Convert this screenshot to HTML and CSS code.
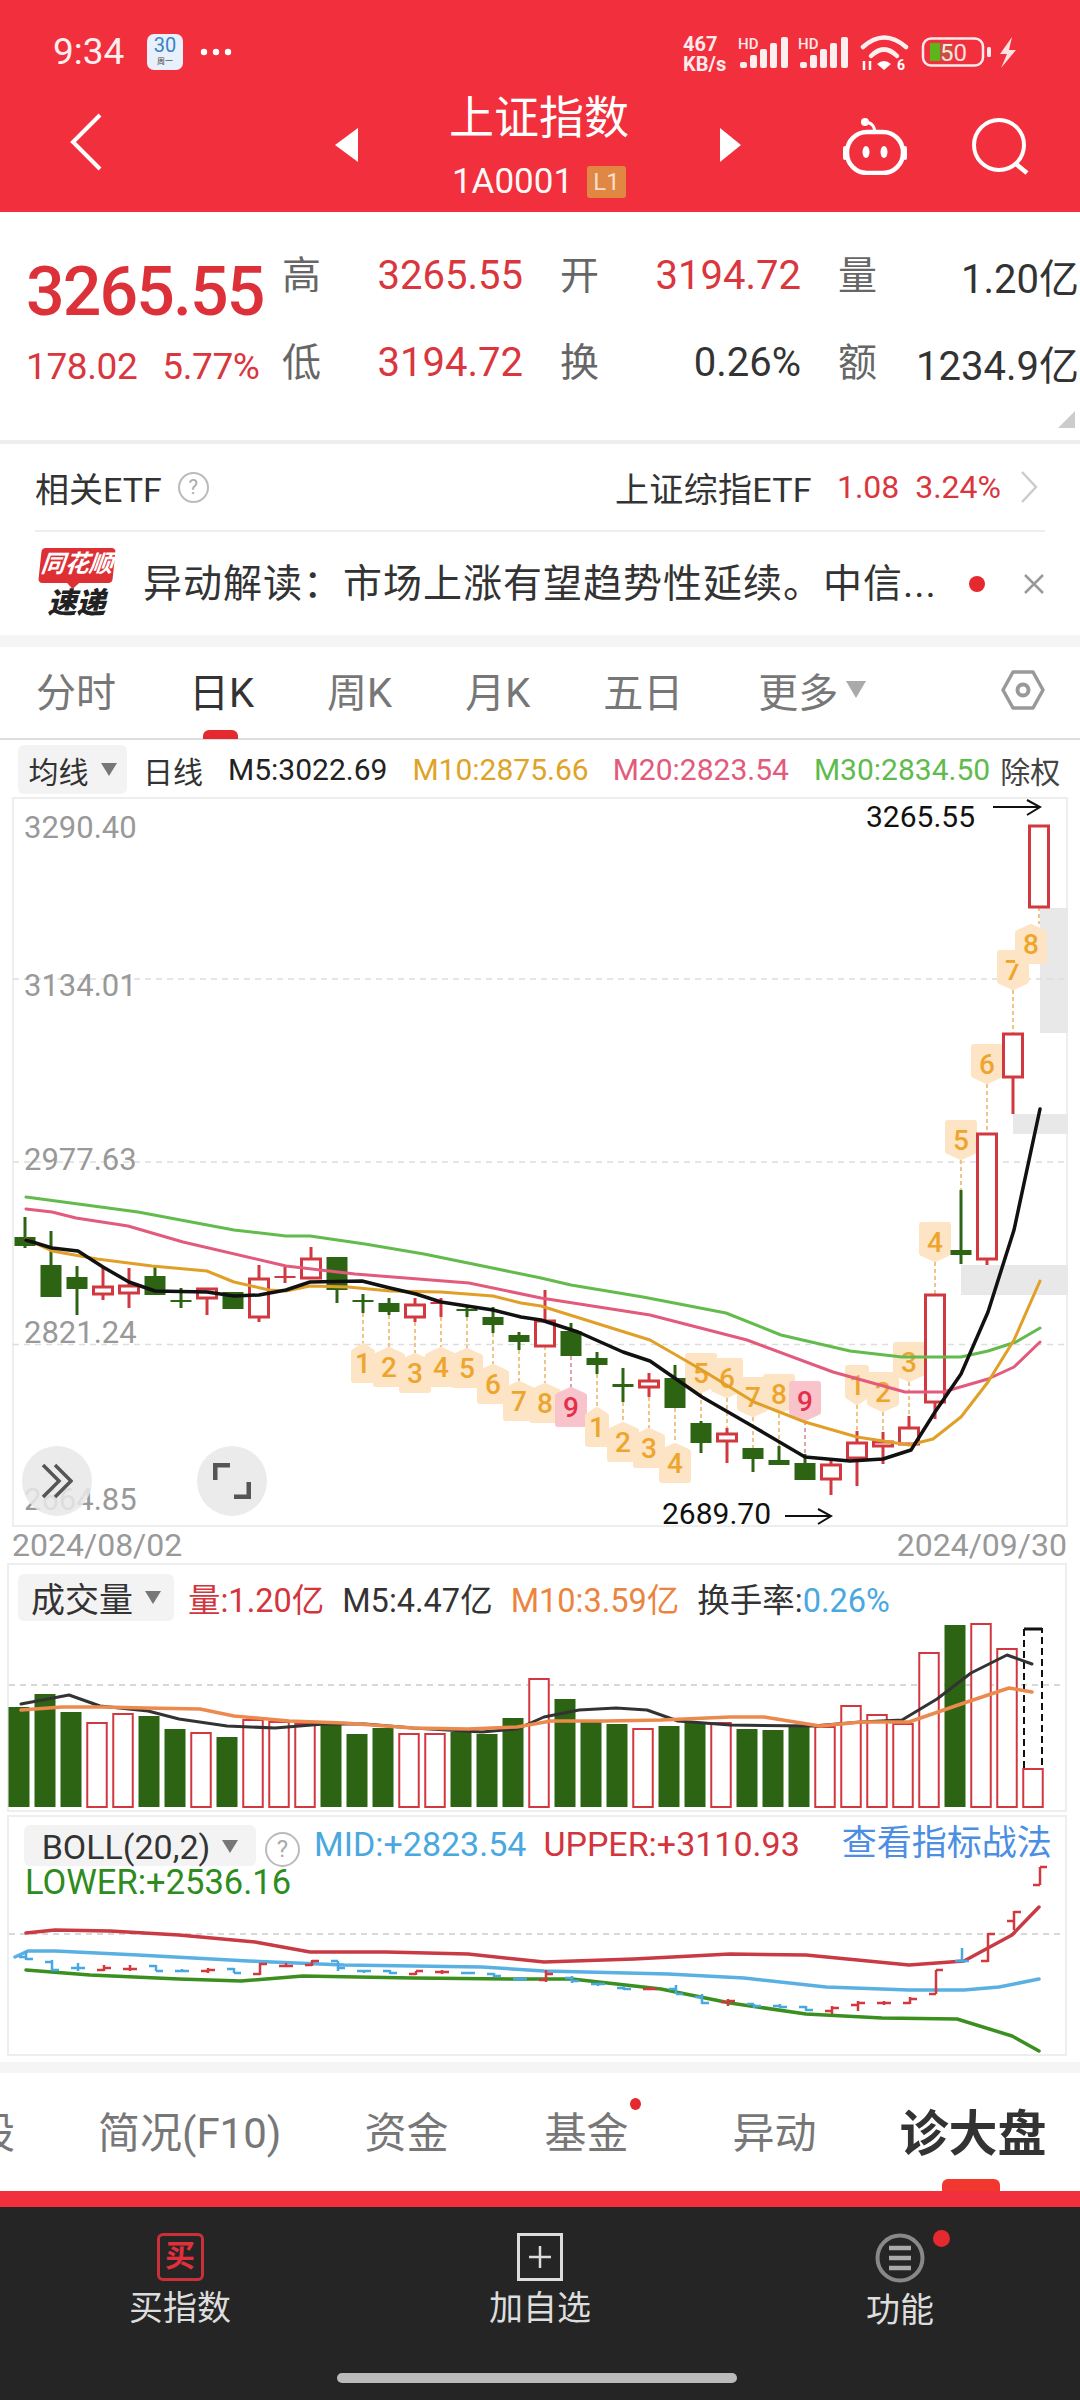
FILE: index.html
```html
<!DOCTYPE html>
<html lang="zh-CN">
  <head>
    <meta charset="utf-8">
    <title>上证指数</title>
    <link rel="stylesheet" href="styles.css">
  </head>
  <body>
    <div id="top">
      <div class="status">
        <span class="clock">9:34</span>
        <span class="cal"><b>30</b><i>周一</i></span>
        <svg class="more" width="32" height="8" viewBox="0 0 32 8"><circle cx="4" cy="4" r="3.2" fill="#fff"/><circle cx="16" cy="4" r="3.2" fill="#fff"/><circle cx="28" cy="4" r="3.2" fill="#fff"/></svg>
        <svg class="status-icons" width="334" height="46" viewBox="683 30 334 46">
          <text x="683" y="51" class="net">467</text>
          <text x="683" y="71" class="net">KB/s</text>
          <text x="738" y="49" class="hd">HD</text>
          <g fill="#fff" opacity=".92">
            <rect x="740" y="62" width="7" height="6" rx="2"/><rect x="750" y="55" width="7" height="13" rx="2"/><rect x="760" y="49" width="7" height="19" rx="2"/><rect x="770" y="43" width="7" height="25" rx="2"/><rect x="781" y="37" width="7" height="31" rx="2"/>
          </g>
          <text x="798" y="49" class="hd">HD</text>
          <g fill="#fff" opacity=".92">
            <rect x="800" y="62" width="7" height="6" rx="2"/><rect x="810" y="55" width="7" height="13" rx="2"/><rect x="820" y="49" width="7" height="19" rx="2"/><rect x="830" y="43" width="7" height="25" rx="2"/><rect x="841" y="37" width="7" height="31" rx="2"/>
          </g>
          <g fill="none" stroke="#fff" stroke-width="4.5" opacity=".92" stroke-linecap="round">
            <path d="M863 47Q884 28 906 47"/>
            <path d="M871 56Q884 43 897 56"/>
          </g>
          <path d="M877 64Q884 58 891 64L884 70Z" fill="#fff"/>
          <path d="M864 61v9M870 61v9" stroke="#fff" stroke-width="2.5"/>
          <text x="897" y="70" class="wifi6">6</text>
          <rect x="930" y="43" width="10" height="18" fill="#5cb51a"/>
          <rect x="940" y="43" width="13" height="18" fill="#c9503c"/>
          <rect x="923" y="38.5" width="60" height="27" rx="8" fill="none" stroke="#fff" stroke-width="2.5" opacity=".9"/>
          <rect x="987" y="47" width="4" height="10" rx="1.5" fill="#fff" opacity=".9"/>
          <text x="940" y="61" class="batt">50</text>
          <path d="M1012 37L1000 54H1007L1001 68L1016 50H1009Z" fill="#fff" opacity=".85"/>
        </svg>
      </div>
      <div class="nav">
        <svg class="back" width="34" height="60" viewBox="0 0 34 60"><path d="M31 3L4 30L31 57" fill="none" stroke="#fff" stroke-width="4"/></svg>
        <div class="switcher">
          <span class="tri tri-left"></span>
          <div class="name">
            <div class="name-title">上证指数</div>
            <div class="name-code">1A0001<span class="lvl">L1</span></div>
          </div>
          <span class="tri tri-right"></span>
        </div>
        <div class="nav-icons">
          <svg width="64" height="58" viewBox="843 116 64 58">
            <path d="M874 132C876 126 871 121 865 121" fill="none" stroke="#fff" stroke-width="3"/>
            <circle cx="865" cy="121" r="4" fill="#fff"/>
            <rect x="847" y="131" width="56" height="41" rx="20" fill="none" stroke="#fff" stroke-width="4.5"/>
            <rect x="843" y="145" width="4" height="14" rx="2" fill="#fff"/>
            <rect x="903" y="145" width="4" height="14" rx="2" fill="#fff"/>
            <ellipse cx="866" cy="151" rx="3.5" ry="6" fill="#fff"/>
            <ellipse cx="884" cy="151" rx="3.5" ry="6" fill="#fff"/>
          </svg>
          <svg width="60" height="58" viewBox="972 116 60 58">
            <circle cx="999" cy="144" r="25" fill="none" stroke="#fff" stroke-width="4"/>
            <path d="M1016 163L1027 172" stroke="#fff" stroke-width="4.5"/>
          </svg>
        </div>
      </div>
    </div>

    <div class="stats">
      <div class="now">
        <div class="now-price">3265.55</div>
        <div class="now-change"><span>178.02</span><span>5.77%</span></div>
      </div>
      <div class="cells">
        <div class="cell"><span class="k">高</span><span class="v up">3265.55</span></div>
        <div class="cell"><span class="k">开</span><span class="v up">3194.72</span></div>
        <div class="cell"><span class="k">量</span><span class="v">1.20亿</span></div>
        <div class="cell"><span class="k">低</span><span class="v up">3194.72</span></div>
        <div class="cell"><span class="k">换</span><span class="v">0.26%</span></div>
        <div class="cell"><span class="k">额</span><span class="v">1234.9亿</span></div>
      </div>
      <span class="corner"></span>
    </div>

    <div class="etf">
      <span class="etf-title">相关ETF</span>
      <span class="help">?</span>
      <span class="etf-name">上证综指ETF</span>
      <span class="etf-val">1.08&nbsp;&nbsp;3.24%</span>
      <svg class="etf-go" width="18" height="32" viewBox="0 0 18 32"><path d="M2 1L16 16L2 31" fill="none" stroke="#ccc" stroke-width="2.5"/></svg>
    </div>

    <div class="notice">
      <div class="logo">
        <div class="logo-top"><span>同花顺</span></div>
        <div class="logo-bot">速递</div>
      </div>
      <div class="notice-text">异动解读：市场上涨有望趋势性延续。中信...</div>
      <span class="notice-dot"></span>
      <svg width="22" height="22" viewBox="0 0 22 22"><path d="M2 2L20 20M20 2L2 20" stroke="#999" stroke-width="2.5"/></svg>
    </div>

    <div class="band"></div>

    <div class="periods">
      <span>分时</span>
      <span class="on">日K</span>
      <span>周K</span>
      <span>月K</span>
      <span>五日</span>
      <span class="with-tri">更多<i class="down"></i></span>
      <svg class="hex" width="44" height="42" viewBox="0 0 44 42">
        <path d="M12 3H32L42 21L32 39H12L2 21Z" fill="none" stroke="#999" stroke-width="3.5" stroke-linejoin="round"/>
        <circle cx="22" cy="21" r="5.5" fill="none" stroke="#999" stroke-width="4"/>
      </svg>
    </div>

    <div class="ma">
      <span class="pick">均线<i class="down small"></i></span>
      <span class="ma-day">日线</span>
      <span class="ma-5">M5:3022.69</span>
      <span class="ma-10">M10:2875.66</span>
      <span class="ma-20">M20:2823.54</span>
      <span class="ma-30">M30:2834.50</span>
      <span class="ma-fq">除权</span>
    </div>

    <div class="chart">
      <svg id="kline" width="1056" height="730" viewBox="12 797 1056 730"></svg>
      <span class="round-btn round-skip">
        <svg width="32" height="36" viewBox="0 0 32 36"><path d="M2 2L18 18L2 34M14 2L30 18L14 34" fill="none" stroke="#555" stroke-width="3.5"/></svg>
      </span>
      <span class="round-btn round-full">
        <svg width="38" height="36" viewBox="0 0 38 36"><path d="M2 17V2H17M36 19V34H21" fill="none" stroke="#555" stroke-width="5"/></svg>
      </span>
    </div>

    <div class="dates"><span>2024/08/02</span><span>2024/09/30</span></div>

    <div class="panel panel-vol">
      <svg id="volume" width="1060" height="249" viewBox="7 1563 1060 249"></svg>
      <div class="legend">
        <span class="pick pick-vol">成交量<i class="down small"></i></span>
        <span class="c-red">量:1.20亿</span>
        <span class="c-dark">M5:4.47亿</span>
        <span class="c-orange">M10:3.59亿</span>
        <span class="c-dark">换手率:<em class="c-blue">0.26%</em></span>
      </div>
    </div>

    <div class="panel panel-boll">
      <svg id="boll" width="1060" height="241" viewBox="7 1815 1060 241"></svg>
      <div class="legend legend-boll">
        <span class="pick pick-boll">BOLL(20,2)<i class="down small"></i></span>
        <span class="help help-boll">?</span>
        <span class="c-blue">MID:+2823.54</span>
        <span class="c-red">UPPER:+3110.93</span>
        <span class="boll-link">查看指标战法</span>
      </div>
      <div class="legend-lower">LOWER:+2536.16</div>
    </div>

    <div class="band band-low"></div>

    <div class="tabs">
      <span>股</span>
      <span>简况(F10)</span>
      <span>资金</span>
      <span class="tab-fund">基金</span>
      <span>异动</span>
      <span class="tab-on">诊大盘</span>
    </div>

    <div class="red-strip"></div>

    <div class="bar">
      <div class="bar-item">
        <span class="buy-icon">买</span>
        <span>买指数</span>
      </div>
      <div class="bar-item">
        <svg width="46" height="48" viewBox="0 0 46 48"><rect x="1.5" y="1.5" width="43" height="45" fill="none" stroke="#ddd" stroke-width="3"/><path d="M23 13V35M12 24H34" stroke="#ddd" stroke-width="2.5"/></svg>
        <span>加自选</span>
      </div>
      <div class="bar-item">
        <span class="fn-icon">
          <svg width="50" height="50" viewBox="0 0 50 50"><circle cx="25" cy="25" r="22.5" fill="none" stroke="#888" stroke-width="4"/><path d="M14 15H36M14 25H36M14 35H36" stroke="#aaa" stroke-width="4.5"/></svg>
          <i class="fn-dot"></i>
        </span>
        <span>功能</span>
      </div>
      <div class="home"></div>
    </div>

    <script src="chart.js"></script>
  </body>
</html>
```

FILE: styles.css
```css
html, body {
  margin: 0;
  padding: 0;
}
body {
  width: 1080px;
  height: 2400px;
  overflow: hidden;
  background: #fff;
  color: #333;
  font-family: Roboto, "Noto Sans CJK SC", sans-serif;
  display: flex;
  flex-direction: column;
}
i, em {
  font-style: normal;
}

/* header */
#top {
  height: 212px;
  background: #f22f3c;
  color: #fff;
  flex: none;
}
.status {
  height: 85px;
  box-sizing: border-box;
  padding: 34px 63px 0 53px;
  display: flex;
  align-items: flex-start;
}
.clock {
  font-size: 37px;
  line-height: 36px;
  width: 94px;
  opacity: .92;
}
.cal {
  width: 36px;
  height: 36px;
  background: #e8f1fb;
  border-radius: 7px;
  display: flex;
  flex-direction: column;
  align-items: center;
  color: #3b82c4;
}
.cal b {
  font-weight: 400;
  font-size: 20px;
  line-height: 23px;
}
.cal i {
  font-size: 8px;
  line-height: 10px;
  color: #444;
}
.more {
  margin: 14px 0 0 17px;
}
.status-icons {
  margin: -4px 0 0 auto;
  overflow: visible;
}
.net {
  font-size: 20px;
  font-weight: 700;
  fill: #fff;
  opacity: .9;
}
.hd {
  font-size: 15px;
  font-weight: 500;
  fill: #fff;
  opacity: .9;
}
.wifi6 {
  font-size: 14px;
  font-weight: 700;
  fill: #fff;
}
.batt {
  font-size: 24px;
  fill: #fff;
  opacity: .85;
}
.nav {
  height: 127px;
  display: grid;
  grid-template-columns: 1fr auto 1fr;
  align-items: center;
}
.back {
  margin: -14px 0 0 69px;
}
.switcher {
  display: flex;
  align-items: center;
  gap: 0;
  width: 407px;
  justify-content: space-between;
  margin-left: -4px;
}
.tri {
  width: 0;
  height: 0;
  border-top: 17px solid transparent;
  border-bottom: 17px solid transparent;
  margin-top: -8px;
}
.tri-left {
  border-right: 23px solid #fff;
}
.tri-right {
  border-left: 21px solid #fff;
}
.name {
  text-align: center;
}
.name-title {
  font-size: 45px;
  line-height: 54px;
  margin-top: -2px;
}
.name-code {
  font-size: 35px;
  line-height: 44px;
  margin-top: 14px;
  display: flex;
  align-items: center;
  justify-content: center;
  gap: 14px;
  opacity: .97;
}
.lvl {
  width: 39px;
  height: 32px;
  line-height: 32px;
  background: #e08a44;
  border-radius: 3px;
  font-size: 24px;
  text-align: center;
  color: #f8e4d0;
}
.nav-icons {
  display: flex;
  justify-content: flex-end;
  align-items: center;
  gap: 65px;
  padding-right: 48px;
  margin-top: -6px;
}

/* quote block */
.stats {
  height: 232px;
  flex: none;
  position: relative;
  display: flex;
  box-sizing: border-box;
  padding: 20px 5px 0 26px;
  border-bottom: 4px solid #eee;
}
.now {
  width: 256px;
  flex: none;
}
.now-price {
  font-size: 68px;
  font-weight: 500;
  line-height: 76px;
  color: #dd3139;
  margin-top: 22px;
  letter-spacing: -1.9px;
}
.now-change {
  font-size: 37px;
  color: #d9363e;
  line-height: 44px;
  margin-top: 15px;
  display: flex;
  gap: 25px;
  letter-spacing: -.4px;
}
.cells {
  display: grid;
  grid-template-columns: repeat(3, 241px);
  grid-auto-rows: 87px;
  column-gap: 37px;
}
.cell {
  display: flex;
  justify-content: space-between;
  align-items: center;
  font-size: 40px;
}
.k {
  color: #666;
  font-size: 39px;
  margin-bottom: 8px;
}
.v {
  color: #333;
}
.v.up {
  color: #d9363e;
}
.corner {
  position: absolute;
  right: 5px;
  bottom: 12px;
  border-left: 17px solid transparent;
  border-bottom: 17px solid #ccc;
}

/* etf row */
.etf {
  height: 86px;
  margin: 0 35px;
  flex: none;
  border-bottom: 2px solid #eee;
  display: flex;
  align-items: center;
  font-size: 34px;
}
.help {
  width: 27px;
  height: 27px;
  border: 2px solid #bbb;
  border-radius: 50%;
  color: #aaa;
  font-size: 20px;
  line-height: 27px;
  text-align: center;
  margin-left: 16px;
}
.etf-name {
  margin-left: auto;
  letter-spacing: .3px;
}
.etf-val {
  color: #d9363e;
  margin: 0 19px 0 25px;
  font-size: 32px;
}
.etf-go {
  margin-right: 7px;
}

/* notice row */
.notice {
  height: 103px;
  flex: none;
  box-sizing: border-box;
  padding: 0 35px 0 36px;
  display: flex;
  align-items: center;
}
.logo {
  width: 81px;
  flex: none;
  text-align: center;
  margin-top: -2px;
}
.logo-top {
  background: #dd2f34;
  color: #fff;
  line-height: 32px;
  border-radius: 4px;
  position: relative;
  margin-left: 4px;
  width: 74px;
  transform: skewX(-6deg);
}
.logo-top span {
  font-size: 24px;
  font-weight: 700;
  font-style: italic;
}
.logo-top::after {
  content: "";
  position: absolute;
  left: 28px;
  bottom: -6px;
  border-top: 7px solid #dd2f34;
  border-left: 7px solid transparent;
  border-right: 7px solid transparent;
}
.logo-bot {
  font-size: 29px;
  font-weight: 900;
  font-style: italic;
  line-height: 30px;
  margin-top: 5px;
  color: #222;
}
.notice-text {
  margin-left: 26px;
  flex: 1;
  font-size: 39px;
  line-height: 44px;
  letter-spacing: 1px;
  white-space: nowrap;
  overflow: hidden;
}
.notice-dot {
  width: 16px;
  height: 16px;
  background: #e4292f;
  border-radius: 50%;
  margin-right: 38px;
}

.band {
  height: 12px;
  flex: none;
  background: #f5f5f5;
}

/* period tabs */
.periods {
  height: 93px;
  flex: none;
  box-sizing: border-box;
  border-bottom: 2px solid #ddd;
  padding: 0 35px 6px 36px;
  display: flex;
  align-items: center;
  gap: 73px;
  font-size: 40px;
  color: #777;
  position: relative;
}
.periods .on {
  color: #333;
}
.periods .on::after {
  content: "";
  position: absolute;
  left: 203px;
  bottom: -1px;
  width: 35px;
  height: 9px;
  background: #e4292f;
  border-radius: 6px 6px 0 0;
}
.with-tri {
  display: flex;
  align-items: center;
  gap: 8px;
  margin-left: 2px;
}
.down {
  width: 0;
  height: 0;
  border-top: 17px solid #aaa;
  border-left: 10px solid transparent;
  border-right: 10px solid transparent;
}
.down.small {
  border-top-width: 13px;
  border-left-width: 8px;
  border-right-width: 8px;
  border-top-color: #777;
}
.hex {
  margin-left: auto;
}

/* ma legend */
.ma {
  height: 57px;
  flex: none;
  box-sizing: border-box;
  padding: 2px 0 0 18px;
  display: flex;
  align-items: center;
  font-size: 30px;
  white-space: nowrap;
}
.pick {
  display: flex;
  align-items: center;
  justify-content: center;
  gap: 12px;
  background: #f3f3f3;
  border-radius: 6px;
  width: 109px;
  height: 49px;
  box-sizing: border-box;
}
.ma-day {
  margin-left: 16px;
}
.ma-5 {
  margin-left: 25px;
  color: #222;
}
.ma-10 {
  margin-left: 25px;
  color: #dfa328;
}
.ma-20 {
  margin-left: 24px;
  color: #e25a7c;
}
.ma-30 {
  margin-left: 25px;
  color: #5fbb4d;
}
.ma-fq {
  margin-left: 10px;
  color: #444;
}

/* kline */
.chart {
  width: 1056px;
  height: 730px;
  flex: none;
  margin-left: 12px;
  position: relative;
}
.chart > svg {
  display: block;
  overflow: visible;
}
.axis {
  font-size: 31px;
  fill: #999;
}
.mark {
  font-size: 30px;
  fill: #111;
}
.badge {
  font-size: 28px;
  font-weight: 500;
  fill: #eea52e;
  text-anchor: middle;
}
.badge-pink {
  fill: #e2304c;
}
.round-btn {
  position: absolute;
  top: 649px;
  width: 70px;
  height: 70px;
  border-radius: 50%;
  background: rgba(232, 232, 232, .86);
  display: flex;
  align-items: center;
  justify-content: center;
}
.round-skip {
  left: 10px;
}
.round-full {
  left: 185px;
}
.dates {
  height: 36px;
  flex: none;
  padding: 0 13px 0 12px;
  display: flex;
  justify-content: space-between;
  align-items: center;
  font-size: 32px;
  line-height: 36px;
  color: #999;
}

/* lower panels */
.panel {
  flex: none;
  width: 1060px;
  margin-left: 7px;
  box-sizing: border-box;
  border: 2px solid #eee;
  position: relative;
}
.panel svg {
  position: absolute;
  left: -2px;
  top: -2px;
  overflow: visible;
}
.panel-vol {
  height: 249px;
  margin-bottom: 3px;
}
.panel-boll {
  height: 241px;
}
.legend {
  position: relative;
  display: flex;
  align-items: center;
  gap: 18px;
  font-size: 32.5px;
  padding: 9px 0 0 9px;
  white-space: nowrap;
}
.pick-vol {
  width: 156px;
  height: 47px;
  font-size: 34px;
  margin-right: -4px;
}
.c-red {
  color: #d2353d;
}
.c-dark {
  color: #333;
}
.c-orange {
  color: #ec8440;
}
.c-blue {
  color: #4aa8e0;
}
.legend-boll {
  font-size: 34px;
  align-items: flex-start;
  padding: 8px 0 0 15px;
  height: 40px;
  box-sizing: border-box;
  line-height: 38px;
  gap: 17px;
}
.pick-boll {
  width: 232px;
  height: 41px;
  font-size: 34px;
  line-height: 30px;
  padding-top: 2px;
  margin-right: -8px;
}
.help-boll {
  flex: none;
  width: 31px;
  height: 31px;
  line-height: 31px;
  font-size: 24px;
  margin: 7px -3px 0 0;
}
.boll-link {
  color: #4b8ee2;
  font-size: 35px;
  margin-left: 25px;
}
.legend-lower {
  position: relative;
  font-size: 34.5px;
  line-height: 32px;
  color: #2e8b20;
  padding-left: 16px;
  margin-top: 9px;
}

.band-low {
  height: 11px;
  margin-top: 6px;
}

/* bottom tabs */
.tabs {
  height: 118px;
  flex: none;
  box-sizing: border-box;
  margin-left: -27px;
  display: flex;
  align-items: center;
  gap: 83px;
  font-size: 42px;
  color: #777;
  padding-bottom: 5px;
  position: relative;
  white-space: nowrap;
}
.tab-fund {
  margin: 0 21px 0 13px;
  position: relative;
}
.tab-fund::after {
  content: "";
  position: absolute;
  right: -13px;
  top: -1px;
  width: 11px;
  height: 12px;
  background: #e4292f;
  border-radius: 50%;
}
.tab-on {
  font-size: 49px;
  font-weight: 700;
  color: #333;
}
.tab-on::after {
  content: "";
  position: absolute;
  left: 969px;
  bottom: 0;
  width: 58px;
  height: 12px;
  background: #f2372f;
  border-radius: 6px 6px 0 0;
}
.red-strip {
  height: 16px;
  flex: none;
  background: #f22f3c;
}

/* bottom bar */
.bar {
  flex: 1;
  background: #252525;
  display: flex;
  position: relative;
  color: #ddd;
  font-size: 34px;
}
.bar-item {
  width: 360px;
  display: flex;
  flex-direction: column;
  align-items: center;
  padding-top: 26px;
  gap: 6px;
  line-height: 42px;
}
.buy-icon {
  width: 47px;
  height: 48px;
  box-sizing: border-box;
  border: 3px solid #c9303a;
  border-radius: 6px;
  color: #e0303c;
  font-size: 30px;
  line-height: 40px;
  text-align: center;
  font-weight: 700;
}
.fn-icon {
  position: relative;
  height: 50px;
  display: block;
}
.fn-icon svg {
  display: block;
}
.fn-dot {
  position: absolute;
  left: 58px;
  top: -3px;
  width: 17px;
  height: 17px;
  border-radius: 50%;
  background: #e4292f;
}
.home {
  position: absolute;
  left: 337px;
  bottom: 17px;
  width: 400px;
  height: 10px;
  border-radius: 5px;
  background: #bbb;
}
```

FILE: chart.js
```js
// K线、成交量、BOLL 三张图都用页面坐标画
var RED = "#d2383f", GREEN = "#2d6414", BLUE = "#4aa8e0";

function pts(list) {
  return list.map(function (p) { return p[0] + "," + p[1]; }).join(" ");
}
function line(list, color, w) {
  return '<polyline points="' + pts(list) + '" fill="none" stroke="' + color + '" stroke-width="' + w + '" stroke-linejoin="round" stroke-linecap="round"/>';
}
function dash(x1, x2, y, color) {
  return '<line x1="' + x1 + '" x2="' + x2 + '" y1="' + y + '" y2="' + y + '" stroke="' + (color || "#ddd") + '" stroke-width="1.5" stroke-dasharray="6 5"/>';
}

// [颜色, 上影, 实体上, 实体下, 下影]
var candles = [
  ["g",1217,1237,1246,1248],["g",1231,1265,1297,1297],["g",1266,1277,1289,1315],["r",1268,1287,1294,1300],
  ["r",1268,1286,1293,1308],["g",1267,1276,1295,1295],["g",1288,1300,1302,1308],["r",1289,1289,1298,1315],
  ["g",1292,1292,1309,1309],["r",1265,1279,1317,1322],["r",1267,1276,1278,1283],["r",1247,1259,1278,1278],
  ["g",1257,1257,1290,1303],["g",1294,1300,1302,1313],["g",1298,1303,1312,1315],["r",1298,1305,1317,1322],
  ["r",1298,1302,1304,1317],["g",1307,1309,1311,1317],["g",1307,1317,1325,1333],["g",1332,1335,1342,1350],
  ["r",1290,1321,1346,1346],["g",1323,1331,1356,1356],["g",1352,1358,1365,1374],["g",1368,1384,1387,1402],
  ["r",1373,1381,1387,1397],["g",1365,1378,1408,1408],["g",1421,1423,1443,1453],["r",1428,1434,1441,1463],
  ["g",1448,1448,1459,1472],["g",1446,1460,1465,1465],["g",1454,1463,1480,1480],["r",1459,1465,1479,1495],
  ["r",1431,1443,1458,1486],["r",1432,1442,1446,1464],["r",1416,1428,1444,1444],["r",1295,1295,1402,1419],
  ["g",1190,1250,1255,1264],["r",1134,1134,1259,1265],["r",1034,1034,1077,1114],["r",826,826,907,907]
];

// [K线序号, 数字, 中心y, 徽标x偏移]
var badges = [
  [13,1,1363],[14,2,1367],[15,3,1373],[16,4,1367],[17,5,1368],[18,6,1384],[19,7,1401],[20,8,1403],[21,9,1407],
  [22,1,1427],[23,2,1442],[24,3,1448],[25,4,1463],
  [26,5,1373],[27,6,1378],[28,7,1397],[29,8,1394],[30,9,1401],
  [32,1,1385],[33,2,1392],[34,3,1362],[35,4,1242],[36,5,1140],[37,6,1064],[38,7,970],[39,8,944,-8]
];

var ma30 = [[26,1197],[138,1212],[234,1230],[286,1236],[310,1236],[365,1244],[424,1254],[541,1278],[571,1285],[643,1297],[726,1313],[781,1335],[850,1351],[902,1357],[961,1357],[988,1351],[1016,1342],[1040,1328]];
var ma20 = [[26,1209],[52,1212],[76,1218],[128,1226],[183,1242],[286,1266],[355,1274],[469,1283],[541,1298],[650,1315],[747,1340],[833,1372],[905,1392],[943,1392],[988,1379],[1014,1367],[1040,1342]];
var ma10 = [[26,1239],[52,1251],[97,1259],[152,1266],[207,1271],[234,1282],[269,1290],[286,1291],[310,1286],[348,1287],[390,1291],[441,1292],[493,1296],[521,1303],[541,1306],[650,1340],[702,1370],[754,1402],[805,1422],[857,1437],[909,1445],[933,1439],[961,1417],[988,1382],[1014,1340],[1040,1281]];
var ma5 = [[26,1240],[52,1248],[78,1251],[103,1267],[129,1282],[155,1291],[207,1292],[234,1296],[259,1295],[286,1290],[310,1282],[362,1281],[390,1288],[416,1294],[441,1302],[493,1310],[521,1317],[541,1320],[578,1332],[623,1352],[650,1361],[702,1397],[754,1427],[805,1457],[850,1461],[883,1459],[911,1450],[935,1412],[961,1374],[988,1312],[1014,1230],[1040,1109]];

function drawKline() {
  var s = "";
  // 框
  s += '<rect x="13" y="798" width="1054" height="728" fill="none" stroke="#eee" stroke-width="2"/>';
  // 灰色筹码块
  [[1040,908,125],[1013,1114,20],[961,1265,30]].forEach(function (b) {
    s += '<rect x="' + b[0] + '" y="' + b[1] + '" width="' + (1068 - b[0]) + '" height="' + b[2] + '" fill="#e8e8e8"/>';
  });
  [979,1162,1344.5].forEach(function (y) { s += dash(13, 1067, y); });
  [["3290.40",838],["3134.01",996],["2977.63",1170],["2821.24",1343],["2664.85",1510]].forEach(function (a) {
    s += '<text class="axis" x="24" y="' + a[1] + '">' + a[0] + "</text>";
  });

  badges.forEach(function (b) {
    var c = candles[b[0]], x = 25 + 26 * b[0];
    var cy = b[2], above = cy < c[1], pink = b[1] == 9;
    var fill = pink ? "#f9c3cb" : "#fde4c4";
    var y1 = above ? cy + 20 : c[4], y2 = above ? c[1] : cy - 20;
    s += '<line x1="' + x + '" x2="' + x + '" y1="' + y1 + '" y2="' + y2 + '" stroke="' + (pink ? "#e2a0aa" : "#eec488") + '" stroke-width="2" stroke-dasharray="4 3"/>';
    var bx = x + (b[3] || 0), hw = b[1] == 1 ? 9 : 13, h = 17, tip = above ? 1 : -1;
    var poly = [[bx - hw, cy - tip * h], [bx + hw, cy - tip * h], [bx + hw, cy + tip * 11], [bx, cy + tip * h], [bx - hw, cy + tip * 11]];
    s += '<polygon points="' + pts(poly) + '" fill="' + fill + '" stroke="' + fill + '" stroke-width="6" stroke-linejoin="round"/>';
    s += '<text class="badge' + (pink ? " badge-pink" : "") + '" x="' + bx + '" y="' + (cy + 10) + '">' + b[1] + "</text>";
  });

  candles.forEach(function (c, i) {
    var x = 25 + 26 * i, col = c[0] == "g" ? GREEN : RED;
    s += '<line x1="' + x + '" x2="' + x + '" y1="' + c[1] + '" y2="' + c[4] + '" stroke="' + col + '" stroke-width="3"/>';
    var h = c[3] - c[2];
    if (c[0] == "g" || h < 4) {
      s += '<rect x="' + (x - 10.5) + '" y="' + c[2] + '" width="21" height="' + h + '" fill="' + col + '"/>';
    } else {
      s += '<rect x="' + (x - 9.5) + '" y="' + c[2] + '" width="19" height="' + h + '" fill="#fff" stroke="' + col + '" stroke-width="3"/>';
    }
  });

  s += line(ma30, "#62bb4c", 3) + line(ma20, "#e25a7c", 3) + line(ma10, "#e0a028", 3) + line(ma5, "#111", 3.5);

  s += '<text class="mark" x="866" y="827">3265.55</text>';
  s += '<path d="M993 807H1039M1027 800L1040 807L1027 815" fill="none" stroke="#111" stroke-width="2"/>';
  s += '<text class="mark" x="662" y="1524">2689.70</text>';
  s += '<path d="M785 1516H830M818 1509L831 1516L818 1524" fill="none" stroke="#111" stroke-width="2"/>';
  document.getElementById("kline").innerHTML = s;
}

// 成交量柱顶，原图按放大后的坐标量的
var volTops = [505,463,519,552,525,531,570,582,595,543,550,555,550,585,568,585,585,580,585,538,420,478,543,555,570,562,553,553,570,573,562,565,500,528,555,342,255,252,330,690];
var volRed = [3,4,7,9,10,11,15,16,20,24,27,31,32,33,34,35,37,38,39];
var volM5 = [[30,495],[100,468],[145,500],[215,515],[260,540],[330,560],[400,567],[470,555],[530,555],[600,568],[700,580],[750,570],[790,535],[840,513],[895,506],[940,512],[985,545],[1060,558],[1180,562],[1250,548],[1310,543],[1360,480],[1410,400],[1462,347],[1498,375]];
var volM10 = [[30,512],[90,503],[150,505],[210,506],[290,510],[340,530],[420,547],[500,553],[600,568],[680,570],[750,565],[800,547],[880,545],[960,542],[1060,533],[1110,535],[1190,560],[1250,550],[1320,550],[1400,490],[1465,445],[1498,458]];

function conv(list) {
  return list.map(function (p) {
    return [Math.round(p[0] / 1.452), Math.round(1540 + p[1] / 3.015)];
  });
}

function drawVolume() {
  var s = dash(9, 1065, 1685, "#ccc"), base = 1807;
  volTops.forEach(function (t, i) {
    var x = 8.5 + 26 * i, y = Math.round(1540 + t / 3.015);
    if (volRed.indexOf(i) >= 0) {
      s += '<rect x="' + (x + 0.75) + '" y="' + y + '" width="19.5" height="' + (base - y) + '" fill="#fff" stroke="' + RED + '" stroke-width="2"/>';
    } else {
      s += '<rect x="' + x + '" y="' + y + '" width="21" height="' + (base - y) + '" fill="' + GREEN + '"/>';
    }
  });
  s += '<path d="M1024 1768V1629H1042V1768" fill="none" stroke="#111" stroke-width="2" stroke-dasharray="7 4"/>';
  s += '<path d="M1024 1629H1042" stroke="#111" stroke-width="3"/>';
  s += line(conv(volM5), "#333", 3) + line(conv(volM10), "#ec8a4e", 3.5);
  document.getElementById("volume").innerHTML = s;
}

var bollBars = [
  [1238,1265,1258,1262,"b"],[1265,1300,1272,1295,"b"],[1275,1300,1290,1290,"b"],[1280,1298,1295,1290,"r"],
  [1280,1300,1292,1292,"r"],[1280,1300,1285,1298,"b"],[1293,1303,1298,1298,"b"],[1290,1305,1298,1295,"r"],
  [1290,1305,1292,1305,"b"],[1275,1312,1310,1278,"r"],[1275,1288,1283,1283,"r"],[1265,1285,1280,1270,"r"],
  [1268,1298,1270,1290,"b"],[1295,1305,1300,1300,"b"],[1295,1308,1300,1305,"b"],[1298,1312,1310,1300,"r"],
  [1295,1310,1302,1302,"r"],[1302,1310,1305,1305,"b"],[1305,1318,1310,1315,"b"],[1318,1330,1323,1325,"b"],
  [1295,1332,1328,1310,"r"],[1315,1335,1320,1330,"b"],[1335,1345,1338,1340,"b"],[1345,1358,1350,1355,"b"],
  [1348,1358,1355,1353,"r"],[1342,1370,1355,1368,"b"],[1370,1398,1378,1395,"b"],[1385,1405,1393,1390,"r"],
  [1398,1410,1400,1405,"b"],[1400,1412,1405,1408,"b"],[1405,1420,1408,1418,"b"],[1405,1430,1420,1410,"r"],
  [1390,1420,1403,1395,"r"],[1390,1403,1397,1397,"r"],[1378,1398,1395,1383,"r"],[1295,1370,1368,1297,"r"],
  [1230,1272,1270,1268,"b"],[1185,1272,1270,1188,"r"],[1120,1175,1150,1122,"r"],[985,1040,1040,987,"r"]
];
var bollUp = [[38,1185],[80,1177],[160,1178],[260,1190],[370,1212],[450,1242],[560,1243],[680,1248],[790,1272],[920,1262],[1060,1248],[1170,1250],[1320,1280],[1400,1270],[1470,1190],[1508,1105]];
var bollMid = [[22,1258],[40,1238],[80,1238],[200,1252],[360,1270],[500,1280],[700,1287],[790,1298],[970,1310],[1080,1322],[1200,1347],[1320,1358],[1400,1358],[1450,1347],[1508,1325]];
var bollLow = [[38,1295],[130,1312],[260,1325],[350,1330],[440,1315],[600,1322],[740,1325],[830,1325],[960,1355],[1060,1395],[1170,1428],[1280,1440],[1390,1443],[1470,1495],[1508,1542]];

function drawBoll() {
  var s = dash(9, 1065, 1934, "#ccc");
  s += line(conv(bollUp), "#c83a44", 3.5) + line(conv(bollMid), "#5ab0e2", 3.5) + line(conv(bollLow), "#3a8f1e", 3.5);
  bollBars.forEach(function (b, i) {
    var x = 26 + 26 * i, col = b[4] == "r" ? RED : BLUE;
    var y = function (v) { return Math.round(1540 + v / 3.015); };
    s += '<path d="M' + x + " " + y(b[0]) + "V" + y(b[1]) +
      "M" + (x - 7) + " " + y(b[2]) + "H" + x +
      "M" + x + " " + y(b[3]) + "H" + (x + 7) +
      '" fill="none" stroke="' + col + '" stroke-width="2.5"/>';
  });
  document.getElementById("boll").innerHTML = s;
}

drawKline();
drawVolume();
drawBoll();
```
